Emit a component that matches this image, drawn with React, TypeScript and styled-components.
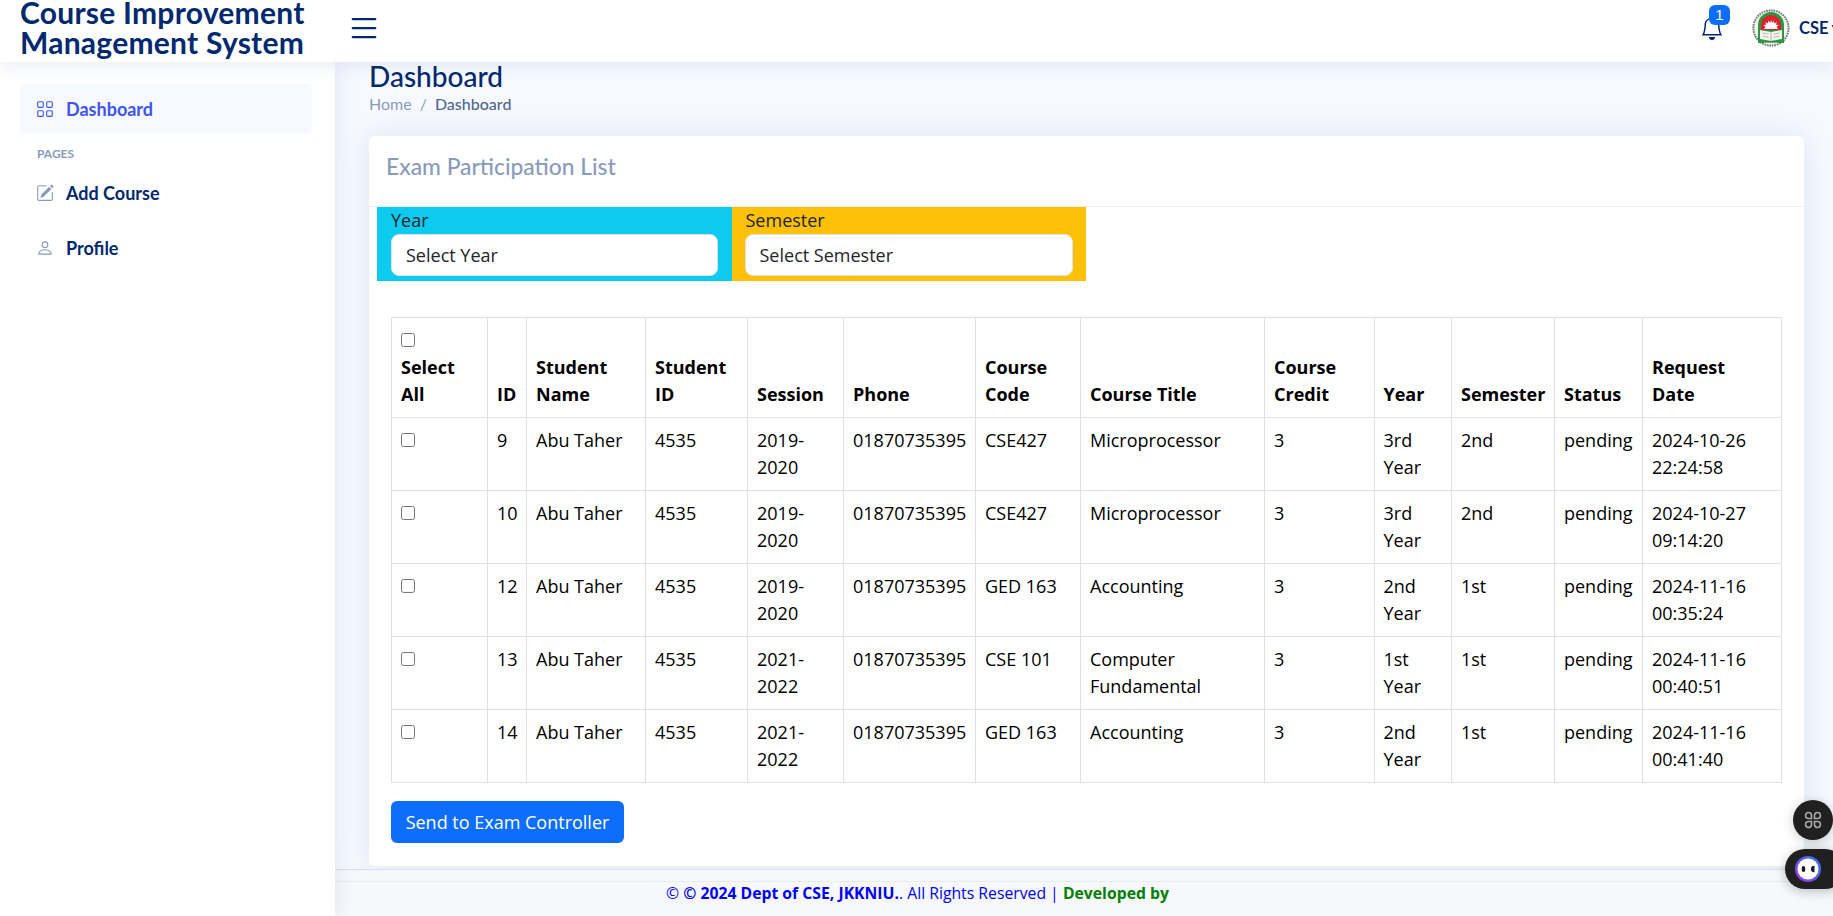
import React from 'react'
import styled, { createGlobalStyle } from 'styled-components'
import { BsBell, BsGrid, BsList, BsPencilSquare, BsPerson } from 'react-icons/bs'

const GlobalStyle = createGlobalStyle`
  * { box-sizing: border-box; }
  html, body { margin: 0; height: 100%; overflow: hidden; }
  body {
    background: #f6f9ff;
    color: #000;
    font-family: "Open Sans", "Liberation Sans", sans-serif;
    font-size: 18px;
  }
`;

const Page = styled.div`
  width: 1833px;
  height: 916px;
  display: flex;
  flex-direction: column;
  overflow: hidden;
`;

const Header = styled.header`
  height: 62px;
  flex: none;
  display: flex;
  align-items: center;
  padding-bottom: 7px;
  background: #fff;
  box-shadow: 0 2px 20px rgba(1, 41, 112, 0.1);
  position: relative;
  z-index: 3;
`;

const Logo = styled.div`
  width: 351px;
  margin-top: -2px;
  padding-left: 20px;
  font-family: "Lato", "Noto Sans", sans-serif;
  font-size: 30px;
  font-weight: 700;
  line-height: 30px;
  color: #012970;
  letter-spacing: 0.25px;
`;

const MenuButton = styled.div`
  display: flex;
  margin-left: -5px;
  color: #012970;
`;

const HeaderRight = styled.div`
  margin-left: auto;
  display: flex;
  align-items: center;
  white-space: nowrap;
`;

const BellWrap = styled.div`
  position: relative;
  display: flex;
  margin-right: 28px;
  color: #012970;
`;

const Badge = styled.span`
  position: absolute;
  top: -11px;
  left: 9px;
  width: 21px;
  height: 20px;
  border-radius: 6px;
  background: #0d6efd;
  color: #fff;
  font-family: "Liberation Sans", sans-serif;
  font-size: 15px;
  line-height: 20px;
  text-align: center;
`;

const UserName = styled.span`
  margin-left: 9px;
  width: 34px;
  overflow: hidden;
  color: #012970;
  font-family: "Lato", sans-serif;
  font-size: 16.5px;
  font-weight: 700;
`;

const Body = styled.div`
  flex: 1;
  min-height: 0;
  display: grid;
  grid-template-columns: 335px 1fr;
`;

const Sidebar = styled.aside`
  background: #fff;
  padding: 22px 23px 0 20px;
  box-shadow: 0 0 20px rgba(1, 41, 112, 0.1);
  position: relative;
  z-index: 2;
`;

const NavLink = styled.div<{ $active?: boolean }>`
  height: 50px;
  display: flex;
  align-items: center;
  gap: 12px;
  padding-left: 16px;
  padding-bottom: ${(p) => (p.$active ? '1px' : '0')};
  margin-bottom: ${(p) => (p.$active ? '0' : '5px')};
  border-radius: 5px;
  background: ${(p) => (p.$active ? '#f6f9ff' : '#fff')};
  color: ${(p) => (p.$active ? '#4154f1' : '#012970')};
  font-family: "Lato", sans-serif;
  font-size: 18px;
  font-weight: 700;

  svg {
    flex: none;
    color: ${(p) => (p.$active ? '#4154f1' : '#899bbd')};
    width: 18px;
    height: 18px;
  }
`;

const NavHeading = styled.div`
  padding: 12px 0 7px 17px;
  color: #899bbd;
  font-family: "Lato", sans-serif;
  font-size: 12px;
  font-weight: 700;
  line-height: 15px;
`;

const Main = styled.main`
  display: flex;
  flex-direction: column;
  min-width: 0;
`;

const Content = styled.div`
  flex: 1;
  padding: 0 29px 0 34px;
`;

const PageTitle = styled.h1`
  margin: 0;
  color: #012970;
  font-family: "Lato", sans-serif;
  font-size: 28px;
  font-weight: 500;
  line-height: 28px;
`;

const Breadcrumb = styled.div`
  display: flex;
  gap: 8px;
  margin-top: 2px;
  font-family: "Lato", sans-serif;
  font-size: 16px;
  line-height: 24px;
  color: #899bbd;

  b {
    color: #51678f;
    font-weight: 500;
  }
`;

const Card = styled.section`
  margin-top: 20px;
  height: 730px;
  background: #fff;
  border-radius: 6px;
  box-shadow: 0 0 30px rgba(1, 41, 112, 0.1);
`;

const CardTitle = styled.div`
  height: 71px;
  padding: 16px 17px 0;
  border-bottom: 1px solid #ebeef4;
  color: #899bbd;
  font-family: "Lato", sans-serif;
  font-size: 22.8px;
  font-weight: 500;
  line-height: 28px;
`;

const Filters = styled.div`
  display: flex;
  margin-left: 8px;
`;

const Filter = styled.div<{ $color: string }>`
  width: 354.5px;
  height: 74px;
  padding: 0 14px;
  background: ${(p) => p.$color};
  line-height: 27px;
  color: #212529;
`;

const SelectBox = styled.div`
  height: 42px;
  padding-left: 14px;
  background: #fff;
  border: 1px solid #dee2e6;
  border-radius: 8px;
  line-height: 40px;

  ${Filter} + ${Filter} & {
    margin: 0 -1px;
  }
`;

const TableWrap = styled.div`
  padding: 36px 22px 0;
`;

const Table = styled.table`
  width: 1390px;
  table-layout: fixed;
  border-collapse: collapse;
  line-height: 27px;

  th, td {
    border: 1px solid #dee2e6;
    padding: 9px;
    vertical-align: top;
    text-align: left;
    overflow: hidden;
  }

  th {
    vertical-align: bottom;
    font-weight: 700;
  }

  input {
    display: block;
    margin: 6px 0 0;
    width: 14px;
    height: 14px;
  }

  th input {
    margin: 6px 0 7px;
  }
`;

const SendButton = styled.button`
  display: block;
  margin: 18px 0 0 22px;
  width: 233px;
  height: 42px;
  padding: 0;
  border: 0;
  border-radius: 6px;
  background: #0d6efd;
  color: #fff;
  font-family: inherit;
  font-size: 18px;
`;

const Footer = styled.footer`
  height: 47px;
  flex: none;
  margin-top: 3px;
  border-top: 1px solid #d5dff0;
  background: #f6f8fb;
`;

const FooterText = styled.div`
  height: 35px;
  margin-top: 11px;
  padding: 0 0 0 331px;
  border-top: 1px solid #e8ebf0;
  font-size: 15.75px;
  line-height: 23px;
  color: #0000ff;
  white-space: nowrap;

  b { font-weight: 700; }
  i { font-style: normal; font-weight: 700; color: #008000; }
`;

const FloatCircle = styled.div`
  position: fixed;
  left: 1793px;
  top: 800px;
  width: 40px;
  height: 40px;
  display: flex;
  align-items: center;
  justify-content: center;
  border-radius: 50%;
  background: #202020;
  box-shadow: 0 2px 12px rgba(0, 0, 0, 0.2);
  z-index: 5;
`;

const FloatPill = styled.div`
  position: fixed;
  left: 1785px;
  top: 849px;
  width: 60px;
  height: 40px;
  padding: 7px 0 0 10px;
  border-radius: 20px;
  background: #202020;
  box-shadow: 0 2px 12px rgba(0, 0, 0, 0.25);
  z-index: 5;
`;

const rows = [
  { id: 9, session: '2019-2020', code: 'CSE427', title: 'Microprocessor', year: '3rd Year', sem: '2nd', date: '2024-10-26 22:24:58' },
  { id: 10, session: '2019-2020', code: 'CSE427', title: 'Microprocessor', year: '3rd Year', sem: '2nd', date: '2024-10-27 09:14:20' },
  { id: 12, session: '2019-2020', code: 'GED 163', title: 'Accounting', year: '2nd Year', sem: '1st', date: '2024-11-16 00:35:24' },
  { id: 13, session: '2021-2022', code: 'CSE 101', title: 'Computer Fundamental', year: '1st Year', sem: '1st', date: '2024-11-16 00:40:51' },
  { id: 14, session: '2021-2022', code: 'GED 163', title: 'Accounting', year: '2nd Year', sem: '1st', date: '2024-11-16 00:41:40' },
];

const colWidths = [96, 39, 119, 102, 96, 132, 105, 184, 109.5, 77.5, 103, 88, 139];

function Emblem() {
  return (
    <svg width="38" height="40" viewBox="0 0 38 40">
      <circle cx="19" cy="20" r="19" fill="#f4f5f1" />
      <circle cx="19" cy="20" r="17.6" fill="none" stroke="#6f7a70" strokeWidth="2" strokeDasharray="1.6 0.9" />
      <path d="M6 35V17a13 13 0 0 1 26 0v18z" fill="#2c9644" />
      <path d="M9 22v-5a10 10 0 0 1 20 0v5z" fill="#e0202a" />
      <path d="M12 21l1.6-2.6-2.3-1.2 3-.6-1-2.6 2.6 1.5.6-3 1.6 2.6 1-3 1 3 1.6-2.6.6 3 2.6-1.5-1 2.6 3 .6-2.3 1.2L26 21z" fill="#fff" />
      <path d="M8 22l11 2 11-2v9l-11 2-11-2z" fill="#f5f5ee" />
      <path d="M19 24v9M10.500 25l6 1.200M10.500 28l6 1.200M27.500 25l-6 1.200M27.500 28l-6 1.200" stroke="#98a098" strokeWidth="0.7" />
      <path d="M12 35h14" stroke="#e8f0e4" strokeWidth="1.200" strokeDasharray="1.500 .7" />
    </svg>
  );
}

function App() {
  return (
    <Page>
      <GlobalStyle />
      <Header>
        <Logo>Course Improvement<br />Management System</Logo>
        <MenuButton><BsList size={36} /></MenuButton>
        <HeaderRight>
          <BellWrap>
            <BsBell size={24} />
            <Badge>1</Badge>
          </BellWrap>
          <Emblem />
          <UserName>CSE ▾</UserName>
        </HeaderRight>
      </Header>
      <Body>
        <Sidebar>
          <NavLink $active><BsGrid />Dashboard</NavLink>
          <NavHeading>PAGES</NavHeading>
          <NavLink><BsPencilSquare />Add Course</NavLink>
          <NavLink><BsPerson />Profile</NavLink>
        </Sidebar>
        <Main>
          <Content>
            <PageTitle>Dashboard</PageTitle>
            <Breadcrumb><span>Home</span><span>/</span><b>Dashboard</b></Breadcrumb>
            <Card>
              <CardTitle>Exam Participation List</CardTitle>
              <Filters>
                <Filter $color="#0dcaf0">
                  Year
                  <SelectBox>Select Year</SelectBox>
                </Filter>
                <Filter $color="#ffc107">
                  Semester
                  <SelectBox>Select Semester</SelectBox>
                </Filter>
              </Filters>
              <TableWrap>
                <Table>
                  <colgroup>
                    {colWidths.map((w, i) => <col key={i} width={w} />)}
                  </colgroup>
                  <thead>
                    <tr>
                      <th><input type="checkbox" />Select All</th>
                      <th>ID</th>
                      <th>Student Name</th>
                      <th>Student ID</th>
                      <th>Session</th>
                      <th>Phone</th>
                      <th>Course Code</th>
                      <th>Course Title</th>
                      <th>Course Credit</th>
                      <th>Year</th>
                      <th>Semester</th>
                      <th>Status</th>
                      <th>Request Date</th>
                    </tr>
                  </thead>
                  <tbody>
                    {rows.map((r) => (
                      <tr key={r.id}>
                        <td><input type="checkbox" /></td>
                        <td>{r.id}</td>
                        <td>Abu Taher</td>
                        <td>4535</td>
                        <td>{r.session}</td>
                        <td>01870735395</td>
                        <td>{r.code}</td>
                        <td>{r.title}</td>
                        <td>3</td>
                        <td>{r.year}</td>
                        <td>{r.sem}</td>
                        <td>pending</td>
                        <td>{r.date}</td>
                      </tr>
                    ))}
                  </tbody>
                </Table>
              </TableWrap>
              <SendButton>Send to Exam Controller</SendButton>
            </Card>
          </Content>
          <Footer>
            <FooterText>© <b>© 2024 Dept of CSE, JKKNIU.</b>. All Rights Reserved | <i>Developed by</i></FooterText>
          </Footer>
        </Main>
      </Body>
      <FloatCircle>
        <svg width="20" height="20" viewBox="0 0 20 20" fill="none" stroke="#a8a8a8" strokeWidth="1.6">
          <path d="M8.500 8.500H5a3 3 0 1 1 3.500-3.500zM11.500 8.500H15A3 3 0 1 0 11.500 5zM8.500 11.500H5A3 3 0 1 0 8.500 15zM11.500 11.500H15a3 3 0 1 1-3.500 3.500z" />
        </svg>
      </FloatCircle>
      <FloatPill>
        <svg width="26" height="26" viewBox="0 0 26 26">
          <defs>
            <linearGradient id="ring" x1="0" y1="1" x2="1" y2="0">
              <stop offset="0" stopColor="#a334e8" />
              <stop offset="1" stopColor="#2f7de8" />
            </linearGradient>
          </defs>
          <circle cx="13" cy="13" r="13" fill="url(#ring)" />
          <circle cx="13" cy="13" r="10.500" fill="#fff" />
          <ellipse cx="8.500" cy="13" rx="1.800" ry="3" fill="#1c1c1c" />
          <path d="M19.500 9.800v6.400a3.400 3.400 0 0 1-3.600-3.200 3.400 3.400 0 0 1 3.600-3.200z" fill="#1c1c1c" />
        </svg>
      </FloatPill>
    </Page>
  );
}

export default App
